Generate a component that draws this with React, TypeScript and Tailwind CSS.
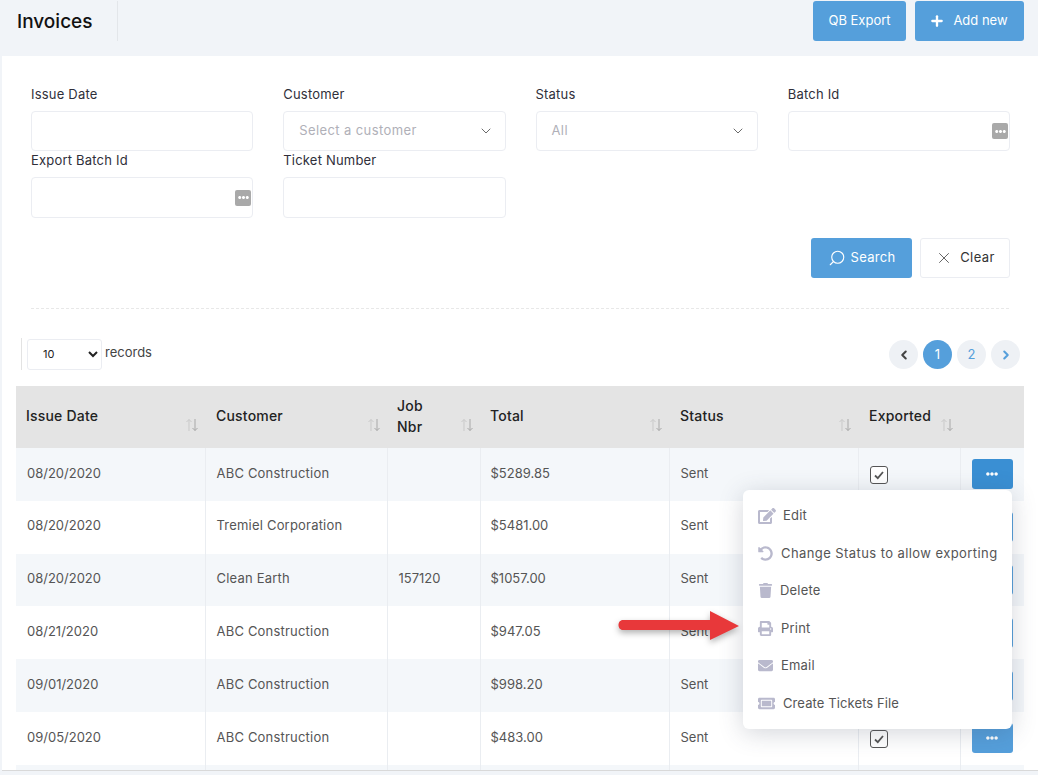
import React from 'react';
import { ChevronDown, ChevronLeft, ChevronRight, Plus, Search, X } from 'lucide-react';
import { FaEdit, FaEllipsisH, FaEnvelope, FaPrint, FaTicketAlt, FaTrash, FaUndoAlt } from 'react-icons/fa';

const rows = [
  { date: '08/20/2020', customer: 'ABC Construction', job: '', total: '$5289.85', status: 'Sent', checked: true, active: true, button: true },
  { date: '08/20/2020', customer: 'Tremiel Corporation', job: '', total: '$5481.00', status: 'Sent', button: true },
  { date: '08/20/2020', customer: 'Clean Earth', job: '157120', total: '$1057.00', status: 'Sent', button: true },
  { date: '08/21/2020', customer: 'ABC Construction', job: '', total: '$947.05', status: 'Sent', button: true },
  { date: '09/01/2020', customer: 'ABC Construction', job: '', total: '$998.20', status: 'Sent', button: true },
  { date: '09/05/2020', customer: 'ABC Construction', job: '', total: '$483.00', status: 'Sent', checked: true, button: true },
  { date: '', customer: '', job: '', total: '', status: '' },
];

const menuItems = [
  { label: 'Edit', icon: <FaEdit size={18} />, cls: 'gap-[7px] tracking-[0.2px]' },
  { label: 'Change Status to allow exporting', icon: <FaUndoAlt size={15} />, cls: 'gap-[8px] tracking-[0.42px]' },
  { label: 'Delete', icon: <FaTrash size={15} />, cls: 'gap-[7px] tracking-[0.2px]' },
  { label: 'Print', icon: <FaPrint size={15} />, cls: 'gap-[8px] tracking-[0.2px]' },
  { label: 'Email', icon: <FaEnvelope size={15} />, cls: 'gap-[8px] tracking-[0.2px]' },
  { label: 'Create Tickets File', icon: <FaTicketAlt size={17} />, cls: 'gap-[8px] tracking-[0.1px]' },
];

const SortIcon = () => (
  <svg width="14" height="14" viewBox="0 0 14 14" fill="none" strokeWidth="1" className="shrink-0 mt-[16px]">
    <path d="M4 13V1.5M1.5 4L4 1.5L6.5 4" stroke="#c9c9c9" />
    <path d="M10 1V12.5M7.5 10L10 12.5L12.5 10" stroke="#a8a8a8" />
  </svg>
);

const Label = ({ children }: { children: React.ReactNode }) => (
  <label className="block text-[13px] leading-[20px] text-[#2f2f3a] tracking-[0.2px]">{children}</label>
);

const Field = ({ label, tall, children }: { label: string; tall?: boolean; children?: React.ReactNode }) => (
  <div>
    <Label>{label}</Label>
    <div
      className={
        tall
          ? 'mt-[7px] h-[41px] rounded-[4px] border border-[#ebedf2] bg-white flex items-center justify-between text-[13px]'
          : 'mt-[7px] h-[40px] rounded-[4px] border border-[#ebedf2] bg-white flex items-center justify-between text-[13px]'
      }
    >
      {children}
    </div>
  </div>
);

const DotsButton = () => (
  <span className="ml-auto mr-[1px] w-[16px] h-[16px] rounded-[2px] bg-[#a9a9a9] flex items-center justify-center text-white">
    <FaEllipsisH size={11} />
  </span>
);

const SelectBox = ({ text }: { text: string }) => (
  <>
    <span className="pl-[15px] text-[#b0b0b8] tracking-[0.4px]">{text}</span>
    <ChevronDown size={16} strokeWidth={1.1} className="mr-[11px] text-[#333]" />
  </>
);

const Th = ({ title, noSort, pad }: { title: React.ReactNode; noSort?: boolean; pad?: boolean }) => (
  <th className="p-0 font-medium text-left">
    <div
      className={
        pad
          ? 'flex items-center justify-between pl-[11px] pr-[6px] text-[14px] leading-[21px] text-[#222] tracking-[0.2px]'
          : 'flex items-center justify-between pl-[10px] pr-[6px] text-[14px] leading-[21px] text-[#222] tracking-[0.2px]'
      }
    >
      <span className="-mt-[3px]">{title}</span>
      {!noSort && <SortIcon />}
    </div>
  </th>
);

const PageCircle = ({ children, active }: { children: React.ReactNode; active?: boolean }) => (
  <span
    className={
      active
        ? 'w-[29px] h-[29px] rounded-full bg-[#559fdb] text-white flex items-center justify-center text-[13px]'
        : 'w-[29px] h-[29px] rounded-full bg-[#eef1f5] text-[#559fdb] flex items-center justify-center text-[13px]'
    }
  >
    {children}
  </span>
);

const cell = 'pl-[11px] pb-[2px] p-0 text-[13px] text-[#555] border-r border-[#eaedf1]';
const totalCell = 'pl-[10px] pb-[2px] p-0 text-[13px] text-[#555] border-r border-[#eaedf1]';

export default function App() {
  return (
    <div
      className="relative w-[1038px] h-[775px] overflow-hidden bg-[#f1f4f8]"
      style={{ fontFamily: 'Inter, "Open Sans", sans-serif' }}
    >
      <header className="h-[56px] flex items-start justify-between pr-[14px] pt-[1px]">
        <div className="flex items-start">
          <h1 className="pl-[17px] pr-[24px] pt-[2px] h-[40px] flex items-center text-[19px] font-medium text-[#111] border-r border-[#e3e6ea]">
            Invoices
          </h1>
        </div>
        <div className="flex gap-[9px]">
          <button className="w-[93px] h-[40px] rounded-[3px] bg-[#559fdb] text-white text-[13px]">QB Export</button>
          <button className="w-[109px] h-[40px] rounded-[3px] bg-[#559fdb] text-white text-[13px] flex items-center justify-center gap-[8px] pr-[2px]">
            <Plus size={16} strokeWidth={3.5} />
            Add new
          </button>
        </div>
      </header>

      <main className="ml-[2px] h-[715px] bg-white border-b border-[#d9d9d9] overflow-hidden">
        <div className="pt-[28px] pl-[29px] pr-[28px]">
          <div className="grid grid-cols-4 gap-x-[30px] auto-rows-[66px] w-[979px]">
            <Field label="Issue Date" />
            <Field label="Customer">
              <SelectBox text="Select a customer" />
            </Field>
            <Field label="Status">
              <SelectBox text="All" />
            </Field>
            <Field label="Batch Id">
              <DotsButton />
            </Field>
            <Field label="Export Batch Id" tall>
              <DotsButton />
            </Field>
            <Field label="Ticket Number" tall />
          </div>
          <div className="mt-[20px] pt-[2px] flex justify-end gap-[8px] w-[979px]">
            <button className="w-[101px] h-[40px] rounded-[3px] bg-[#559fdb] text-white text-[13px] tracking-[0.3px] flex items-center justify-center gap-[5px]">
              <Search size={18} strokeWidth={1.5} className="-scale-x-100" />
              Search
            </button>
            <button className="w-[90px] h-[40px] rounded-[3px] border border-[#ebedf2] bg-white text-[#333] text-[13px] tracking-[0.4px] flex items-center justify-center gap-[7px]">
              <X size={18} strokeWidth={1} />
              Clear
            </button>
          </div>
          <div className="mt-[30px] w-[978px] border-t border-dashed border-[#e8e8e8]" />
        </div>

        <div className="mt-[29px] flex items-center justify-between pl-[19px] pr-[18px]">
          <div className="flex items-center">
            <span className="w-px h-[32px] bg-[#e3e3e3] mr-[5px]" />
            <select className="w-[75px] h-[31px] rounded-[3px] border border-[#ebedf2] bg-white text-[11px] text-[#222] pl-[11px]">
              <option>10</option>
            </select>
            <span className="ml-[3px] text-[13px] text-[#444] -mt-[2px]">records</span>
          </div>
          <div className="flex gap-[5px] mt-[1px]">
            <PageCircle>
              <ChevronLeft size={14} strokeWidth={3.5} className="text-[#444]" />
            </PageCircle>
            <PageCircle active>1</PageCircle>
            <PageCircle>2</PageCircle>
            <PageCircle>
              <ChevronRight size={14} strokeWidth={3.5} />
            </PageCircle>
          </div>
        </div>

        <table className="mt-[16px] ml-[14px] w-[1008px] table-fixed border-collapse">
          <colgroup>
            <col className="w-[189px]" />
            <col className="w-[182px]" />
            <col className="w-[93px]" />
            <col className="w-[189px]" />
            <col className="w-[189px]" />
            <col className="w-[102px]" />
            <col className="w-[64px]" />
          </colgroup>
          <thead>
            <tr className="h-[62px] bg-[#e4e4e4]">
              <Th title="Issue Date" />
              <Th title="Customer" pad />
              <Th title={<>Job<br />Nbr</>} />
              <Th title="Total" />
              <Th title="Status" pad />
              <Th title="Exported" pad />
              <Th title="" noSort />
            </tr>
          </thead>
          <tbody>
            {rows.map((row, i) => (
              <tr key={i} className={i % 2 === 0 ? 'h-[52.8px] bg-[#f4f7fa]' : 'h-[52.8px] bg-white'}>
                <td className={cell}>{row.date}</td>
                <td className={cell}>
                  <span className="tracking-[0.2px]">{row.customer}</span>
                </td>
                <td className={cell}>{row.job}</td>
                <td className={totalCell}>{row.total}</td>
                <td className={cell}>{row.status}</td>
                <td className="pl-[11px] p-0 border-r border-[#eaedf1]">
                  {row.checked && (
                    <span className="mt-[1px] w-[18px] h-[18px] rounded-[3px] border border-[#555] bg-white flex items-center justify-center">
                      <svg width="12" height="12" viewBox="0 0 12 12" fill="none">
                        <path d="M2 6.5L4.8 9.2L10 3" stroke="#555" strokeWidth="1.8" />
                      </svg>
                    </span>
                  )}
                </td>
                <td className="pl-[11px] p-0">
                  {row.button && (
                    <button
                      className={
                        row.active
                          ? 'w-[41px] h-[30px] rounded-[3px] bg-[#3a8fd3] text-white flex items-center justify-center'
                          : 'w-[41px] h-[30px] rounded-[3px] bg-[#559fdb] text-white flex items-center justify-center'
                      }
                    >
                      <FaEllipsisH size={12} />
                    </button>
                  )}
                </td>
              </tr>
            ))}
          </tbody>
        </table>
      </main>

      {/* open row menu */}
      <div className="absolute left-[743px] top-[490px] w-[269px] h-[239px] rounded-[6px] bg-white shadow-[0_4px_24px_rgba(60,70,90,0.22)] flex flex-col justify-between py-[7px] pl-[15px]">
        {menuItems.map((item) => (
          <div key={item.label} className={`flex items-center h-[37.5px] text-[13px] text-[#555] ${item.cls}`}>
            <span className="text-[#b9b9cd] flex items-center">{item.icon}</span>
            {item.label}
          </div>
        ))}
      </div>

      {/* annotation arrow */}
      <svg className="absolute left-[612px] top-[604px]" width="136" height="46" viewBox="0 0 136 46" fill="none">
        <path
          d="M11 16H98V7L127 22L98 36V26H11C5 26 5 16 11 16Z"
          fill="#e8383a"
          style={{ filter: 'drop-shadow(0 3px 3px rgba(0,0,0,0.3))' }}
        />
      </svg>
    </div>
  );
}
